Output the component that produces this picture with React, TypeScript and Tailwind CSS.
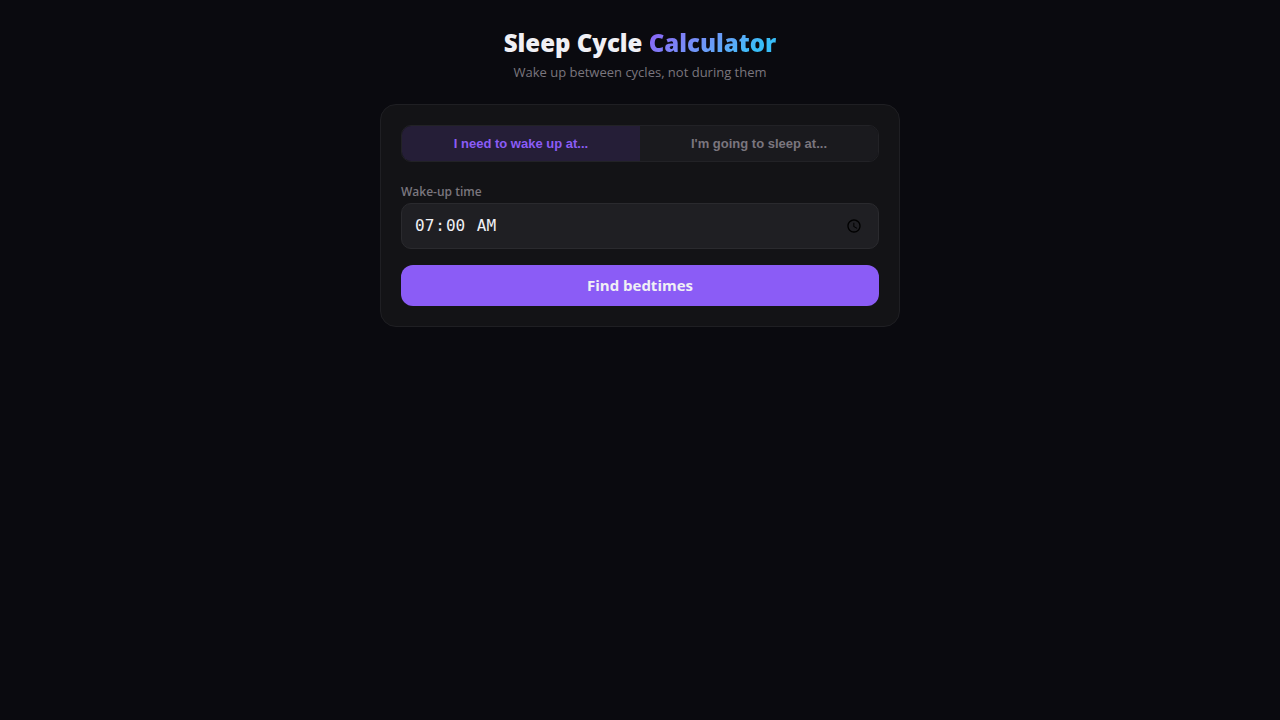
import { useState } from 'react';
import type { FormEvent } from 'react';
import clsx from 'clsx';

type Mode = 'wake' | 'sleep';

const CYCLE_MINUTES = 90;
const FALL_ASLEEP_MINUTES = 15;
const DAY_MINUTES = 24 * 60;

const modes = [
    {
        id: 'wake' as const,
        tab: 'I need to wake up at...',
        label: 'Wake-up time',
        action: 'Find bedtimes'
    },
    {
        id: 'sleep' as const,
        tab: "I'm going to sleep at...",
        label: 'Bedtime',
        action: 'Find wake-up times'
    }
];

// Minutes since midnight to "7:00 AM"
const formatTime = (minutes: number): string => {
    const total = (minutes + DAY_MINUTES) % DAY_MINUTES;
    const hours = Math.floor(total / 60);
    const mins = String(total % 60).padStart(2, '0');
    return `${hours % 12 || 12}:${mins} ${hours < 12 ? 'AM' : 'PM'}`;
};

const getTimes = (mode: Mode, time: string) => {
    const [hours, mins] = time.split(':').map(Number);
    const start = hours * 60 + mins;
    return [6, 5, 4, 3].map(cycles => {
        const offset = cycles * CYCLE_MINUTES + FALL_ASLEEP_MINUTES;
        return {
            cycles,
            time: formatTime(mode === 'wake' ? start - offset : start + offset)
        };
    });
};

const App = () => {
    const [mode, setMode] = useState<Mode>('wake');
    const [time, setTime] = useState('07:00');
    const [results, setResults] = useState<{ cycles: number; time: string }[]>([]);

    const current = modes.find(m => m.id === mode) ?? modes[0];

    const handleSubmit = (e: FormEvent) => {
        e.preventDefault();
        if (time) {
            setResults(getTimes(mode, time));
        }
    };

    return (
        <div className="min-h-screen bg-[#0a0a0f] px-4 py-6 font-['Segoe_UI','Open_Sans',sans-serif] text-[#f0f0f5]">
            <main className="mx-auto w-full max-w-[520px]">
                <header className="mb-[22px] text-center">
                    <h1 className="text-2xl leading-[38px] font-extrabold">
                        Sleep Cycle{' '}
                        <span className="bg-linear-135 from-[#8b5cf6] to-[#38bdf8] to-80% bg-clip-text text-transparent">
                            Calculator
                        </span>
                    </h1>
                    <p className="text-[13px] leading-5 text-[#7a767e]">
                        Wake up between cycles, not during them
                    </p>
                </header>

                <form
                    onSubmit={handleSubmit}
                    className="rounded-2xl border border-[#1f1f23] bg-[#131316] p-5"
                >
                    <div className="mb-5 flex overflow-hidden rounded-[10px] border border-[#222226]">
                        {modes.map(m => (
                            <button
                                key={m.id}
                                type="button"
                                aria-pressed={m.id === mode}
                                onClick={() => {
                                    setMode(m.id);
                                    setResults([]);
                                }}
                                className={clsx(
                                    "flex-1 cursor-pointer py-2 font-['Liberation_Sans',Arial,sans-serif] text-[13px] leading-[19px] font-semibold",
                                    m.id === mode ? 'bg-[#251e37] text-[#8b5cf6]' : 'bg-[#1a1a1e] text-[#7a767e]'
                                )}
                            >
                                {m.tab}
                            </button>
                        ))}
                    </div>

                    <label htmlFor="time" className="mb-0.5 block text-xs leading-[19px] font-semibold text-[#7a767e]">
                        {current.label}
                    </label>
                    <input
                        id="time"
                        type="time"
                        value={time}
                        onChange={(e) => setTime(e.target.value)}
                        className="mb-4 block h-[46px] w-full rounded-[10px] border border-[#2a2a2e] bg-[#1f1f23] px-3 font-['DejaVu_Sans_Mono',monospace] text-base outline-none focus:border-[#8b5cf6]"
                    />

                    <button
                        type="submit"
                        className="block w-full cursor-pointer rounded-xl bg-[#8b5cf6] py-2.5 text-[15px] leading-[21px] font-bold"
                    >
                        {current.action}
                    </button>
                </form>

                {results.length > 0 && (
                    <ul className="mt-4 grid grid-cols-2 gap-3">
                        {results.map(r => (
                            <li key={r.cycles} className="rounded-xl border border-[#1f1f23] bg-[#131316] p-4 text-center">
                                <div className="text-lg font-bold">{r.time}</div>
                                <div className="text-xs text-[#7a767e]">{r.cycles} cycles</div>
                            </li>
                        ))}
                    </ul>
                )}
            </main>
        </div>
    );
};

export default App;
